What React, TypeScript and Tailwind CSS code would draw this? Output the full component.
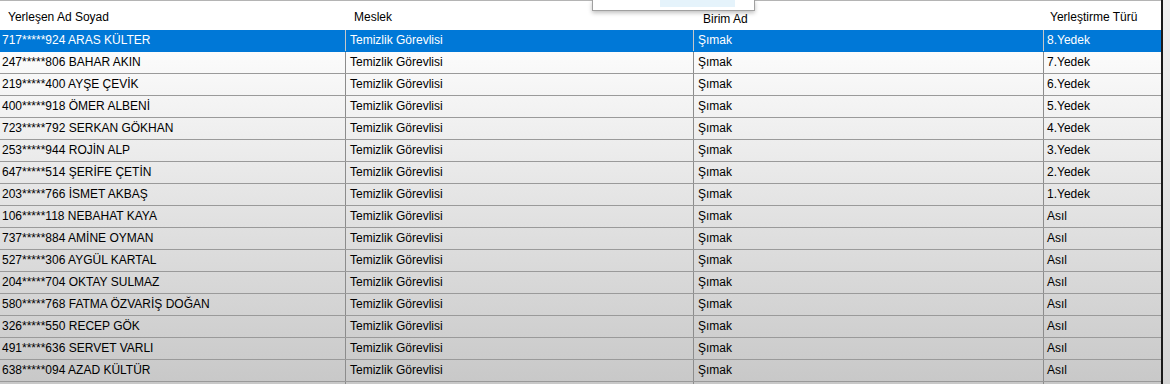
import React from 'react';

interface Row {
  name: string;
  meslek: string;
  birim: string;
  tur: string;
}

const rows: Row[] = [
  { name: '717*****924 ARAS KÜLTER', meslek: 'Temizlik Görevlisi', birim: 'Şımak', tur: '8.Yedek' },
  { name: '247*****806 BAHAR AKIN', meslek: 'Temizlik Görevlisi', birim: 'Şımak', tur: '7.Yedek' },
  { name: '219*****400 AYŞE ÇEVİK', meslek: 'Temizlik Görevlisi', birim: 'Şımak', tur: '6.Yedek' },
  { name: '400*****918 ÖMER ALBENİ', meslek: 'Temizlik Görevlisi', birim: 'Şımak', tur: '5.Yedek' },
  { name: '723*****792 SERKAN GÖKHAN', meslek: 'Temizlik Görevlisi', birim: 'Şımak', tur: '4.Yedek' },
  { name: '253*****944 ROJİN ALP', meslek: 'Temizlik Görevlisi', birim: 'Şımak', tur: '3.Yedek' },
  { name: '647*****514 ŞERİFE ÇETİN', meslek: 'Temizlik Görevlisi', birim: 'Şımak', tur: '2.Yedek' },
  { name: '203*****766 İSMET AKBAŞ', meslek: 'Temizlik Görevlisi', birim: 'Şımak', tur: '1.Yedek' },
  { name: '106*****118 NEBAHAT KAYA', meslek: 'Temizlik Görevlisi', birim: 'Şımak', tur: 'Asıl' },
  { name: '737*****884 AMİNE OYMAN', meslek: 'Temizlik Görevlisi', birim: 'Şımak', tur: 'Asıl' },
  { name: '527*****306 AYGÜL KARTAL', meslek: 'Temizlik Görevlisi', birim: 'Şımak', tur: 'Asıl' },
  { name: '204*****704 OKTAY SULMAZ', meslek: 'Temizlik Görevlisi', birim: 'Şımak', tur: 'Asıl' },
  { name: '580*****768 FATMA ÖZVARİŞ DOĞAN', meslek: 'Temizlik Görevlisi', birim: 'Şımak', tur: 'Asıl' },
  { name: '326*****550 RECEP GÖK', meslek: 'Temizlik Görevlisi', birim: 'Şımak', tur: 'Asıl' },
  { name: '491*****636 SERVET VARLI', meslek: 'Temizlik Görevlisi', birim: 'Şımak', tur: 'Asıl' },
  { name: '638*****094 AZAD KÜLTÜR', meslek: 'Temizlik Görevlisi', birim: 'Şımak', tur: 'Asıl' },
  { name: '', meslek: '', birim: '', tur: '' },
];

const cols = 'grid grid-cols-[345px_348px_350px_118px]';

export default function App() {
  return (
    <div
      className="relative w-[1170px] h-[384px] overflow-hidden bg-[#e6e6e6] flex text-[12px] text-black"
      style={{ fontFamily: '"Liberation Sans", Arial, sans-serif' }}
    >
      {/* grid */}
      <div className="w-[1161px] flex flex-col border-t border-[#b4b4b4]">
        {/* header */}
        <div className={`${cols} h-[29px] shrink-0 bg-white items-center`}>
          <div className="pl-[8px] pt-[2px]">Yerleşen Ad Soyad</div>
          <div className="pl-[9px] pt-[2px]">Meslek</div>
          <div className="pl-[10px] pt-[6px]">Birim Ad</div>
          <div className="pl-[7px] pt-[2px]">Yerleştirme Türü</div>
        </div>

        {/* rows */}
        <div className="flex-1 min-h-0 overflow-hidden bg-linear-to-b from-[#ffffff] to-[#c8c8c8]">
          {rows.map((r, i) => {
            const sel = i === 0;
            return (
              <div
                key={i}
                className={`${cols} h-[22px] border-b ${
                  sel ? 'bg-[#0078d7] text-white border-[#0078d7]' : 'border-[#9a9a9a]'
                }`}
              >
                <div className="pl-[2px] leading-[21px] whitespace-nowrap">{r.name}</div>
                <div className={`pl-[4px] leading-[21px] border-l ${sel ? 'border-[#c8c8c8]' : 'border-[#8c8c8c]'}`}>
                  {r.meslek}
                </div>
                <div className={`pl-[4px] leading-[21px] border-l ${sel ? 'border-[#c8c8c8]' : 'border-[#8c8c8c]'}`}>
                  {r.birim}
                </div>
                <div className={`pl-[3px] leading-[21px] border-l ${sel ? 'border-[#c8c8c8]' : 'border-[#8c8c8c]'}`}>
                  {r.tur}
                </div>
              </div>
            );
          })}
        </div>
      </div>

      {/* right edge / scrollbar strip */}
      <div className="w-[2px] bg-[#1a1a1a]" />
      <div className="flex-1 bg-linear-to-b from-[#f0f0f0] to-[#d4d4d4]" />

      {/* dropdown popup peeking at top */}
      <div className="absolute left-[592px] top-0 w-[163px] h-[11px] bg-white border border-t-0 border-[#a0a0a0] shadow-[0_2px_4px_rgba(0,0,0,0.25)]">
        <div className="absolute left-[67px] top-0 w-[75px] h-[7px] bg-[#e5f3fb]" />
      </div>
    </div>
  );
}
